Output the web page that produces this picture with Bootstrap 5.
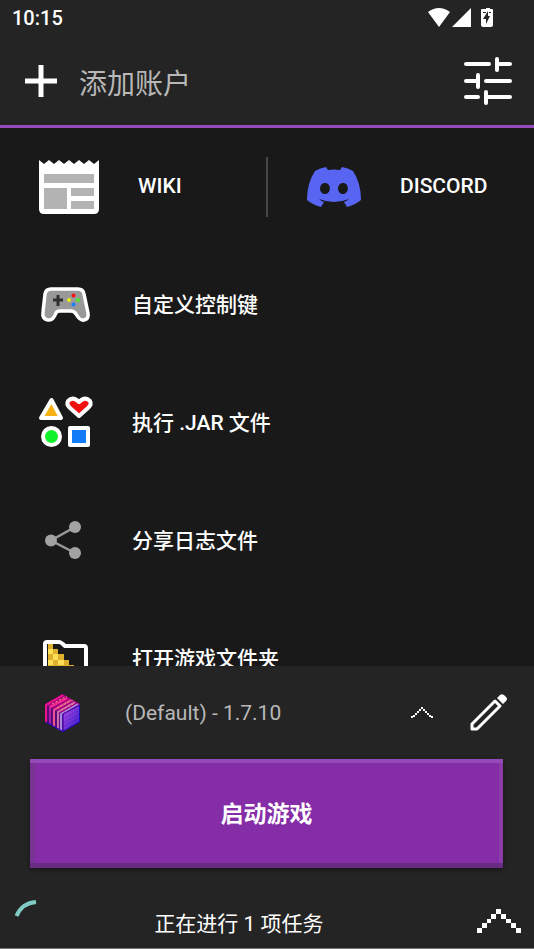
<!DOCTYPE html>
<html lang="zh-CN">
<head>
<meta charset="utf-8">
<meta name="viewport" content="width=device-width, initial-scale=1">
<title>启动器</title>
<link href="https://cdn.jsdelivr.net/npm/bootstrap@5.3.0/dist/css/bootstrap.min.css" rel="stylesheet">
<style>
:root { --panel: #242424; --page: #191919; --accent: #9649b8; }
body { background: var(--page); color: #fff; font-family: Roboto, "Noto Sans CJK SC", sans-serif; }
svg { display: block; flex: none; }
.panel { background: var(--panel); }
.status { height: 36px; font-size: 20px; font-weight: 500; line-height: 36px; padding: 0 41px 0 12px; }
.topbar { height: 92px; border-bottom: 3px solid var(--accent); padding: 0 21px 0 25px; }
.account { color: #b8b8b8; font-size: 28px; font-weight: 400; gap: 22px; line-height: 40px; }
.account span { padding-top: 8px; }
.entries { min-height: 0; }
.entry { height: 118px; font-size: 21px; font-weight: 500; line-height: 32px; padding-left: 36px; gap: 36px; flex: none; }
.entry-pair { height: 118px; flex: none; }
.entry-pair a { font-size: 21px; font-weight: 500; }
.wiki { padding-left: 39px; gap: 39px; }
.discord { padding-left: 39px; gap: 39px; }
.divider { width: 2px; height: 60px; background: #484848; }
.profile { height: 93px; padding: 0 27px 0 45px; }
.version { appearance: none; background: transparent; border: 0; color: #b8b8b8; font-size: 21px; line-height: 32px; padding: 0; margin: 0 37px 0 45px; }
.play { margin: 0 31px 0 30px; height: 109px; padding: 4px 0 0; border: 0; border-radius: 0; background: #842da7; color: #fff; font-size: 23px; font-weight: 700; box-shadow: inset 0 4px #9649b8, inset 0 -5px #6a2c82, inset 5px 0 #783494, inset -4px 0 #8b3caa, 0 2px 4px #0006; }
.play:hover { background: #8e35b2; color: #fff; }
.tasks { height: 81px; border-bottom: 1px solid #777; font-size: 21px; padding: 0 13px 0 14px; }
.task-label { line-height: 30px; padding: 41px 36px 0 0; }
.spin { margin-top: 31px; }
.expand { margin-top: 41px; }
</style>
<script src="https://cdn.jsdelivr.net/npm/bootstrap@5.3.0/dist/js/bootstrap.bundle.min.js"></script>
</head>
<body>
<div class="d-flex flex-column vh-100 overflow-hidden">
  <header class="panel">
    <div class="status d-flex align-items-center justify-content-between">
      <span>10:15</span>
      <svg width="66" height="20" viewBox="427 8 66 20" fill="#fff" aria-hidden="true">
        <path d="M428 12Q439 4 450 12L439 27ZM452 27L471 8V27Z"/>
        <path fill-rule="evenodd" d="M484 9h2V8h4v1h2q1 0 1 1v15q0 2-2 2h-8q-2 0-2-2V10q0-1 1-1zM488 11l-5 8h3v5l4-8h-2zM483 12v1h3v-1zM489 12v1h2v-1z"/>
      </svg>
    </div>
    <div class="topbar d-flex align-items-center justify-content-between">
      <button type="button" class="account btn border-0 p-0 d-flex align-items-center rounded-0">
        <svg width="32" height="32" viewBox="0 0 32 32" aria-hidden="true"><path d="M16 0v32M0 16h32" stroke="#fff" stroke-width="5"/></svg>
        <span>添加账户</span>
      </button>
      <button type="button" class="btn border-0 p-0" aria-label="设置">
        <svg width="50" height="50" viewBox="463 57 50 50" fill="none" stroke="#fff" stroke-width="4" stroke-linecap="round" aria-hidden="true"><path d="M466 65h23M498 65h12M497 60v11M466 82h12M478 76v12M486 82h24M466 98h12M486 98h24M486 93v11"/></svg>
      </button>
    </div>
  </header>

  <main class="entries flex-grow-1 overflow-hidden d-flex flex-column">
    <div class="entry-pair d-flex align-items-center">
      <a href="#wiki" class="wiki col d-flex align-items-center text-white text-decoration-none">
        <svg width="60" height="54" viewBox="0 0 60 54" aria-hidden="true"><path fill="#fff" d="M0 0L5 4 10 0 15 4 20 0 25 4 30 0 35 4 40 0 45 4 50 0 55 4 60 0V49Q60 54 55 54H5Q0 54 0 49Z"/><path fill="#b3b3b3" d="M5 14h50v9H5zM5 28h23v21H5zM32 28h23v8H32zM32 41h23v8H32z"/></svg>
        <span>WIKI</span>
      </a>
      <div class="divider"></div>
      <a href="#discord" class="discord col d-flex align-items-center text-white text-decoration-none">
        <svg width="54" height="40" viewBox="0 0 54 40" aria-hidden="true"><path fill="#5865f2" fill-rule="evenodd" d="M19 0Q13 1 8 4Q0 16 0 33Q6 38 14 40L17 35Q14 34 12 32Q27 38 42 32Q40 34 37 35L40 40Q48 38 54 33Q54 16 46 4Q41 1 35 0L33 3Q27 2 21 3ZM18 16C24.500 16 24.500 27 18 27S11.500 16 18 16ZM36 16C42.500 16 42.500 27 36 27S29.500 16 36 16Z"/></svg>
        <span>DISCORD</span>
      </a>
    </div>
    <a href="#controls" class="entry d-flex align-items-center text-white text-decoration-none">
      <svg width="60" height="60" viewBox="36 275 60 60" aria-hidden="true"><path d="M51 289Q46 289 45 294L43 312Q42 319 48 320Q53 321 56 313Q57 311 60 311H71Q74 311 76 314Q80 321 84 320Q89 319 88 313L84 294Q83 289 78 289Z" fill="#999" stroke="#fff" stroke-width="3.500"/><path d="M58 295v11M53 300h10" stroke="#303030" stroke-width="3"/><circle cx="73.500" cy="295.500" r="2" fill="#f11"/><circle cx="69" cy="300" r="2" fill="#e8ed12"/><circle cx="78" cy="300" r="2" fill="#48e82c"/><circle cx="73.500" cy="304.500" r="2" fill="#1681ff"/></svg>
      <span>自定义控制键</span>
    </a>
    <a href="#jar" class="entry d-flex align-items-center text-white text-decoration-none">
      <svg width="60" height="60" viewBox="36 393 60 60" stroke="#fff" stroke-width="4" stroke-linejoin="round" aria-hidden="true"><path fill="#f8b017" d="M51.500 400L61 418H41Z"/><path fill="#f01010" d="M79 416L70 408Q66 404 68 401Q73 396 79 402Q85 396 90 401Q92 404 88 408Z"/><circle cx="51.500" cy="436.500" r="8.500" fill="#12f22b"/><path fill="#127cf7" d="M70 428h18v17H70z"/></svg>
      <span>执行 .JAR 文件</span>
    </a>
    <a href="#share" class="entry d-flex align-items-center text-white text-decoration-none">
      <svg width="60" height="60" viewBox="36 510 60 60" aria-hidden="true"><path d="M75 526L51 539.500L75 552" fill="none" stroke="#999" stroke-width="2.500"/><g fill="#a3a3a3"><circle cx="75" cy="526" r="6"/><circle cx="51" cy="539.500" r="6"/><circle cx="75" cy="552" r="6"/></g></svg>
      <span>分享日志文件</span>
    </a>
    <a href="#folder" class="entry d-flex align-items-center text-white text-decoration-none">
      <svg width="60" height="60" viewBox="36 629 60 60" aria-hidden="true"><path fill="#deb02b" d="M48 644h5v5h5v5h6v6h5v5h5v17H48z"/><path fill="#ffdf57" d="M48 649h5v5h-5zM53 654h5v6h-5zM58 660h6v5h-6zM48 660h5v5h-5z"/><path d="M45 684V644Q45 642 47 642H59Q61 642 65 646H84Q86 646 86 648V684Z" fill="none" stroke="#fff" stroke-width="4" stroke-linejoin="round"/></svg>
      <span>打开游戏文件夹</span>
    </a>
  </main>

  <footer class="panel d-flex flex-column flex-shrink-0">
    <div class="profile d-flex align-items-center">
      <svg width="35" height="38" viewBox="0 0 35 38" aria-hidden="true">
        <defs>
          <linearGradient id="side" x1="0" y1="0" x2="0" y2="1"><stop offset="0" stop-color="#e9168f"/><stop offset="1" stop-color="#841fb4"/></linearGradient>
          <linearGradient id="front" x1="0" y1="0" x2="1" y2="1"><stop offset="0" stop-color="#b84be0"/><stop offset="1" stop-color="#2516c8"/></linearGradient>
          <clipPath id="cube"><path d="M17.500 0L35 10V28L17.500 38L0 28V10Z"/></clipPath>
        </defs>
        <g clip-path="url(#cube)">
          <path d="M0 0H35V38H0Z" fill="#7e087d"/>
          <path d="M0 10L17.500 0L35 10L17.500 20Z" fill="#a80081"/>
          <path d="M0 10L17.500 20V38L0 28Z" fill="#66107e"/>
          <g fill="none" stroke-width="2">
            <path d="M1 29V11L18 1" stroke="#f0148a"/><path d="M5 31V13L22 4" stroke="url(#side)"/><path d="M5 13L22 4" stroke="#f32c91"/>
            <path d="M9 33V16L26 6" stroke="#ed5299"/><path d="M13 36V18L30 8" stroke="#c96bad"/><path d="M16 37V20L33 10" stroke="#a487df"/>
          </g>
          <path d="M7 10L22 2M12 14L28 6M16 16L30 9" stroke="#e8a173" stroke-dasharray="2 2"/>
          <path d="M3 13v16M7 16v17M11 18v17" stroke="#4c0570"/>
          <path d="M18 20L35 11V28L18 38Z" fill="url(#front)" stroke="#3517b7"/>
          <path d="M20 22L34 14M20 26L34 18M20 30L34 22M20 34L34 26" stroke="#9d5ef0" stroke-opacity=".5" stroke-dasharray="1 2"/>
          <path d="M20 24L34 16M20 28L34 20M20 32L34 24" stroke="#5d1fc6" stroke-opacity=".6" stroke-dasharray="2 2"/>
          <path d="M18 37V20L34 11" fill="none" stroke="#58079d"/>
          <path d="M0 28L18 38L35 28V11" fill="none" stroke="#1808b8" stroke-width="2"/>
        </g>
      </svg>
      <button type="button" class="version flex-grow-1 d-flex align-items-center justify-content-between" aria-haspopup="listbox">
        <span>(Default) - 1.7.10</span>
        <svg width="22" height="12" viewBox="0 0 22 12" fill="#fff" aria-hidden="true"><path d="M10 0h2v2h-2zM8 2h2v2H8zM12 2h2v2h-2zM6 4h2v2H6zM14 4h2v2h-2zM4 6h2v2H4zM16 6h2v2h-2zM2 8h2v2H2zM18 8h2v2h-2zM0 9h2v2H0zM20 9h2v2h-2z"/></svg>
      </button>
      <button type="button" class="btn border-0 p-0" aria-label="编辑">
        <svg width="37" height="37" viewBox="470 694 37 37" aria-hidden="true"><path d="M495 701L472 724V729H477L500 706Z" fill="none" stroke="#fff" stroke-width="3" stroke-linejoin="round"/><path fill="#fff" d="M497 698L500 695Q503 693 506 697Q508 699 506 701L503 704Z"/></svg>
      </button>
    </div>
    <button type="button" class="play">启动游戏</button>
    <div class="tasks d-flex align-items-start">
      <svg class="spin" width="23" height="20" viewBox="14 899 23 20" aria-hidden="true"><path d="M16.500 916Q22 903 36 902" fill="none" stroke="#80cbc4" stroke-width="4"/></svg>
      <span class="task-label flex-grow-1 text-center">正在进行 1 项任务</span>
      <button type="button" class="expand btn border-0 p-0" aria-label="展开任务">
        <svg width="44" height="25" viewBox="0 0 44 25" fill="#fff" aria-hidden="true"><path d="M19 0h5v5h-5zM14 5h5v5h-5zM24 5h5v5h-5zM10 10h4v4h-4zM29 10h5v4h-5zM5 14h5v5H5zM34 14h5v5h-5zM0 19h5v5H0zM39 19h5v5h-5z"/></svg>
      </button>
    </div>
  </footer>
</div>
</body>
</html>
